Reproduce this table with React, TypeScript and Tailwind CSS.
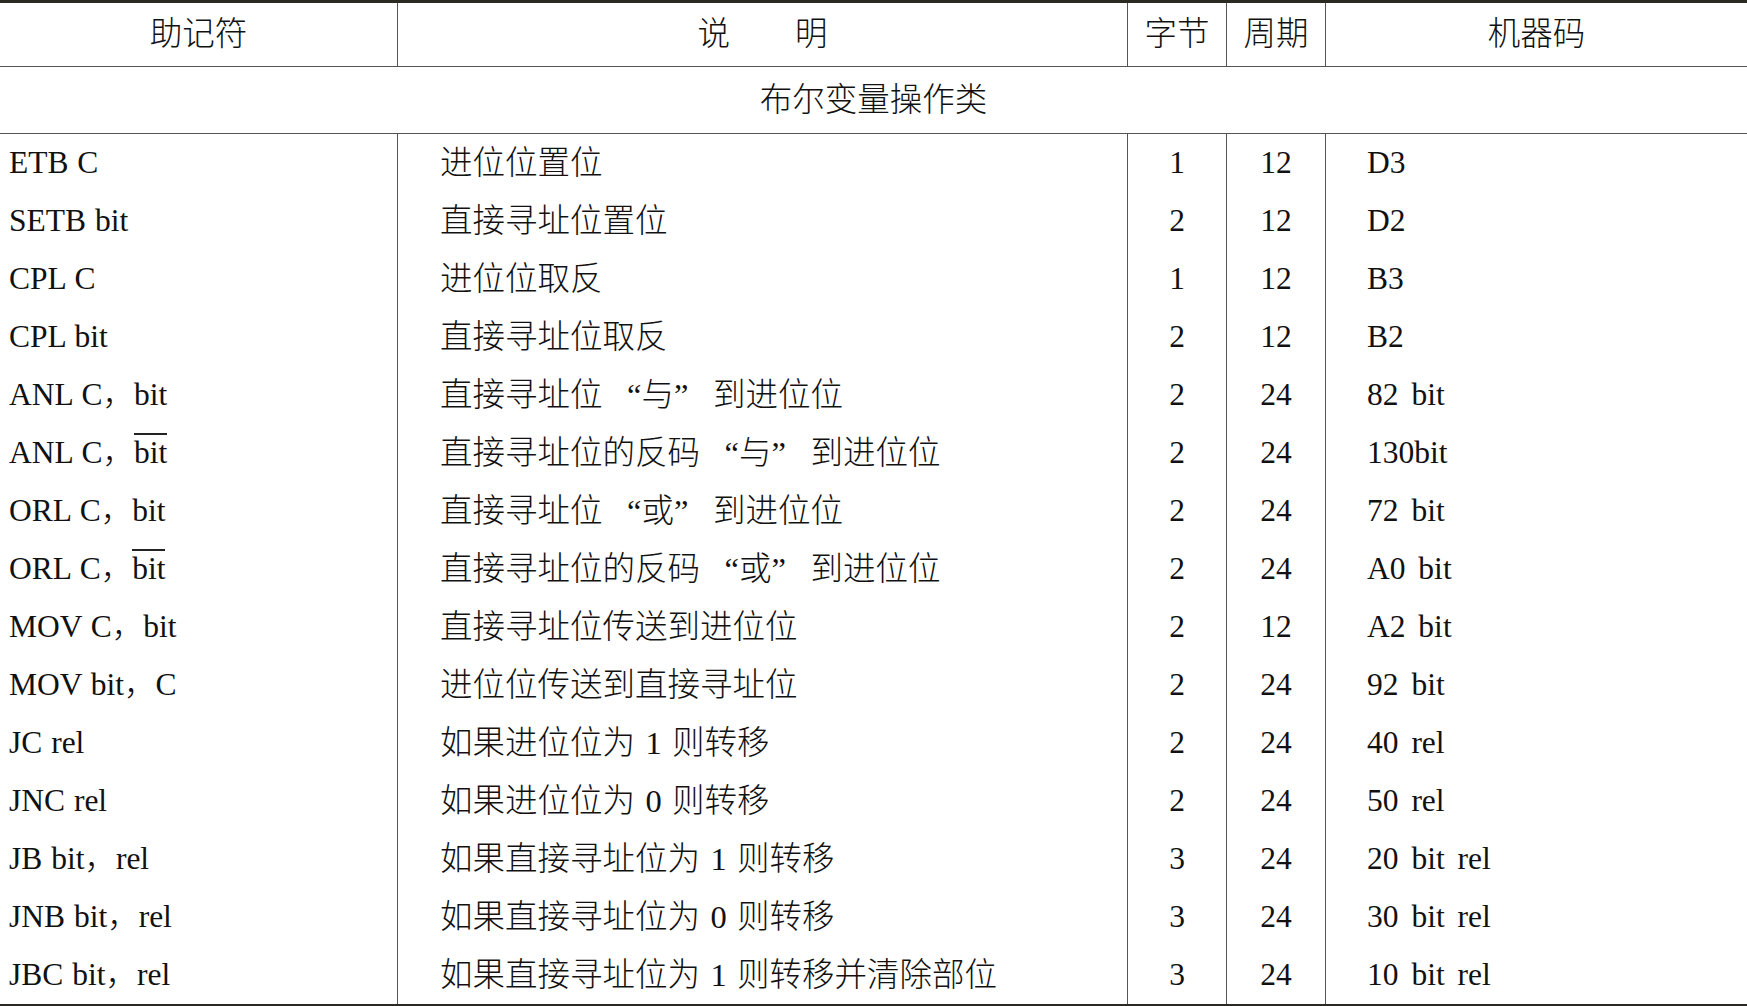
function Bar({ children }: { children: React.ReactNode }) {
  return (
    <span className="relative">
      {children}
      <span className="absolute left-0 right-0 top-[4px] h-[1.5px] bg-[#222]" />
    </span>
  );
}

const rows: [React.ReactNode, string, string, string, string][] = [
  ['ETB C', '进位位置位', '1', '12', 'D3'],
  ['SETB bit', '直接寻址位置位', '2', '12', 'D2'],
  ['CPL C', '进位位取反', '1', '12', 'B3'],
  ['CPL bit', '直接寻址位取反', '2', '12', 'B2'],
  ['ANL C，bit', '直接寻址位“与”到进位位', '2', '24', '82 bit'],
  [<>ANL C，<Bar>bit</Bar></>, '直接寻址位的反码“与”到进位位', '2', '24', '130bit'],
  ['ORL C，bit', '直接寻址位“或”到进位位', '2', '24', '72 bit'],
  [<>ORL C，<Bar>bit</Bar></>, '直接寻址位的反码“或”到进位位', '2', '24', 'A0 bit'],
  ['MOV C，bit', '直接寻址位传送到进位位', '2', '12', 'A2 bit'],
  ['MOV bit，C', '进位位传送到直接寻址位', '2', '24', '92 bit'],
  ['JC rel', '如果进位位为 1 则转移', '2', '24', '40 rel'],
  ['JNC rel', '如果进位位为 0 则转移', '2', '24', '50 rel'],
  ['JB bit，rel', '如果直接寻址位为 1 则转移', '3', '24', '20 bit rel'],
  ['JNB bit，rel', '如果直接寻址位为 0 则转移', '3', '24', '30 bit rel'],
  ['JBC bit，rel', '如果直接寻址位为 1 则转移并清除部位', '3', '24', '10 bit rel'],
];

const cols = 'grid grid-cols-[398px_730px_99px_99px_1fr]';

// full-width quotes and spaced digits, like the printed table
function Desc({ text }: { text: string }) {
  const parts = text.split(/([“”]| [01] )/);
  return (
    <>
      {parts.map((p, i) => {
        if (p === '“') return <span key={i} className="inline-block w-[1.2em] text-right">“</span>;
        if (p === '”') return <span key={i} className="inline-block w-[1.2em] text-left">”</span>;
        if (p.startsWith(' ')) return <span key={i} className="inline-block px-[0.32em]">{p.trim()}</span>;
        return <span key={i}>{p}</span>;
      })}
    </>
  );
}

export default function App() {
  return (
    <div
      className="w-[1747px] h-[1006px] bg-white text-[#111] text-[31.5px] font-light overflow-hidden"
      style={{ fontFamily: '"Liberation Serif", "Noto Sans CJK SC", serif' }}
    >
      <div className="border-t-[3px] border-b-[3px] border-[#2a2a22]">
        {/* header */}
        <div className={`${cols} h-[64px] border-b border-[#555] text-[32.5px]`}>
          <div className="flex items-center justify-center border-r border-[#555]">助记符</div>
          <div className="flex items-center justify-center border-r border-[#555]">说　　明</div>
          <div className="flex items-center justify-center border-r border-[#555]">字节</div>
          <div className="flex items-center justify-center border-r border-[#555]">周期</div>
          <div className="flex items-center justify-center">机器码</div>
        </div>

        <div className="h-[67px] flex items-center justify-center border-b border-[#555] text-[32.5px]">
          布尔变量操作类
        </div>

        {rows.map((r, i) => (
          <div key={i} className={`${cols} h-[58px]`}>
            <div className="flex items-center pl-[9px] border-r border-[#555] whitespace-pre [word-spacing:1px]">{r[0]}</div>
            <div className="flex items-center pl-[42px] border-r border-[#555] whitespace-nowrap text-[32.5px]">
              <Desc text={r[1]} />
            </div>
            <div className="flex items-center justify-center border-r border-[#555]">{r[2]}</div>
            <div className="flex items-center justify-center border-r border-[#555]">{r[3]}</div>
            <div className="flex items-center pl-[41px] whitespace-nowrap [word-spacing:5px]">{r[4]}</div>
          </div>
        ))}
      </div>
    </div>
  );
}
